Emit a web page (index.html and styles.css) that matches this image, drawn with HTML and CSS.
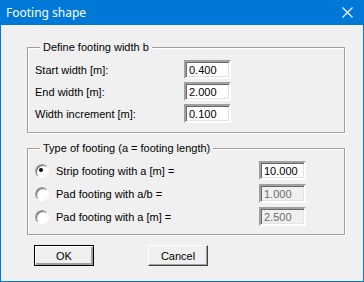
FILE: index.html
```html
<!DOCTYPE html>
<html lang="en">

<head>
    <meta charset="UTF-8">
    <title>Footing shape</title>
    <link rel="stylesheet" href="styles.css">
</head>

<body>
    <div class="window">
        <div class="titlebar">
            <span class="title">Footing shape</span>
            <svg class="close" width="11" height="11" viewBox="0 0 11 11">
                <path d="M0.5 0.5 L10.5 10.5 M10.5 0.5 L0.5 10.5" stroke="#fff" stroke-width="1.2" />
            </svg>
        </div>

        <div class="content">
            <!-- footing width -->
            <fieldset class="group group-width">
                <legend>Define footing width b</legend>
                <div class="rows">
                    <label>Start width [m]:</label>
                    <input class="field" type="text" value="0.400">
                    <label>End width [m]:</label>
                    <input class="field" type="text" value="2.000">
                    <label>Width increment [m]:</label>
                    <input class="field" type="text" value="0.100">
                </div>
            </fieldset>

            <!-- footing type -->
            <fieldset class="group group-type">
                <legend>Type of footing (a = footing length)</legend>
                <div class="rows radios">
                    <span class="radio checked"></span>
                    <label>Strip footing with a [m] =</label>
                    <input class="field" type="text" value="10.000">
                    <span class="radio"></span>
                    <label>Pad footing with a/b =</label>
                    <input class="field disabled" type="text" value="1.000" disabled>
                    <span class="radio"></span>
                    <label>Pad footing with a [m] =</label>
                    <input class="field disabled" type="text" value="2.500" disabled>
                </div>
            </fieldset>

            <div class="buttons">
                <button class="btn default">OK</button>
                <button class="btn">Cancel</button>
            </div>
        </div>
    </div>
</body>

</html>
```

FILE: styles.css
```css
/* Reset */
body,
div,
fieldset,
legend,
input,
button {
    margin: 0;
    padding: 0;
    box-sizing: border-box;
}

body {
    font-family: 'Liberation Sans', Arial, sans-serif;
    font-size: 11px;
    color: #000;
    background: #f0f0f0;
}

/* Window frame */
.window {
    width: 364px;
    height: 282px;
    border: 1px solid #0078d7;
    border-top: 0;
    background: #f0f0f0;
}

.titlebar {
    height: 25px;
    background: #0078d7;
    display: flex;
    align-items: center;
    justify-content: space-between;
    padding: 0 10px 0 5px;
}

.title {
    font-family: 'Noto Sans', sans-serif;
    font-size: 12px;
    color: #fff;
}

.close {
    display: block;
}

.content {
    padding: 16px 0 0 26px;
}

/* Group boxes */
.group {
    width: 318px;
    border: 1px solid #a0a0a0;
    box-shadow: 1px 1px 0 #fff, inset 1px 1px 0 #fff;
    padding: 6px 0 9px 7px;
}

.group legend {
    margin-left: 5px;
    padding: 0 3px;
    line-height: 13px;
    background: #f0f0f0;
}

.rows {
    display: grid;
    grid-template-columns: 149px 47px;
    grid-auto-rows: 19px;
    row-gap: 3px;
    align-items: center;
}

.group-type {
    margin-top: 9px;
    padding-top: 6px;
    padding-bottom: 8px;
}

.radios {
    grid-template-columns: 21px 203px 47px;
    row-gap: 4px;
}

/* Edit fields */
.field {
    width: 47px;
    height: 19px;
    font-family: 'Liberation Sans', Arial, sans-serif;
    font-size: 11px;
    color: #000;
    background: #fff;
    border: 2px solid;
    border-color: #a0a0a0 #fff #fff #a0a0a0;
    box-shadow: inset 1px 1px 0 #696969, inset -1px -1px 0 #e3e3e3;
    padding: 0 0 0 3px;
    outline: none;
}

.field.disabled {
    background: #f0f0f0;
    color: #6d6d6d;
}

/* Radio buttons */
.radio {
    width: 12px;
    height: 12px;
    border-radius: 50%;
    border: 1px solid;
    border-color: #a0a0a0 #fff #fff #a0a0a0;
    background: #fff;
    box-shadow: inset 1px 1px 0 #696969;
    position: relative;
}

.radio.checked::after {
    content: "";
    position: absolute;
    left: 3px;
    top: 3px;
    width: 4px;
    height: 4px;
    border-radius: 50%;
    background: #000;
}

/* Buttons */
.buttons {
    display: flex;
    gap: 54px;
    padding: 10px 0 0 7px;
}

.btn {
    width: 60px;
    height: 21px;
    font-family: 'Liberation Sans', Arial, sans-serif;
    font-size: 11px;
    color: #000;
    background: #f0f0f0;
    border: 1px solid;
    border-color: #fff #404040 #404040 #fff;
    box-shadow: inset -1px -1px 0 #a0a0a0;
}

.btn.default {
    border: 1px solid #000;
    box-shadow: inset 1px 1px 0 #fff, inset -2px -2px 0 #a0a0a0;
}
```
